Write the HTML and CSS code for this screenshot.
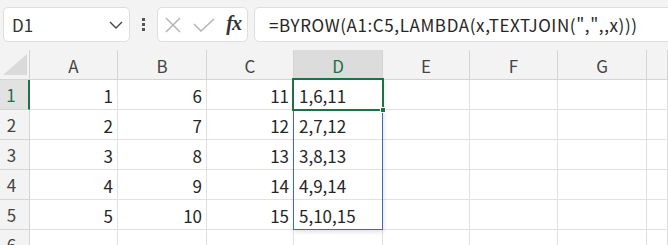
FILE: index.html
```html
<!DOCTYPE html>
<html lang="ja">
<head>
    <meta charset="UTF-8">
    <title>BYROW - Excel</title>
    <link rel="stylesheet" href="styles.css">
</head>
<body>
    <div class="toolbar">
        <div class="name-box">
            <span>D1</span>
            <svg class="chevron" width="14" height="8" viewBox="0 0 14 8"><path d="M1 1 L7 7 L13 1" fill="none" stroke="#444" stroke-width="1.4"/></svg>
        </div>
        <div class="dots"><i></i><i></i><i></i></div>
        <div class="fx-box">
            <svg width="16" height="16" viewBox="0 0 16 16"><path d="M1 1 L15 15 M15 1 L1 15" stroke="#b4b4b4" stroke-width="1.5" fill="none"/></svg>
            <svg width="22" height="14" viewBox="0 0 22 14"><path d="M1 6 L8 13 L21 1" stroke="#b4b4b4" stroke-width="1.5" fill="none"/></svg>
            <span class="fx">fx</span>
        </div>
        <div class="formula">=BYROW(A1:C5,LAMBDA(x,TEXTJOIN(",",,x)))</div>
    </div>

    <div class="sheet">
        <div class="hd corner">
            <svg width="24" height="21" viewBox="0 0 24 21"><path d="M24 0 L24 21 L0 21 Z" fill="#dadada"/></svg>
        </div>
        <div class="hd col">A</div>
        <div class="hd col">B</div>
        <div class="hd col">C</div>
        <div class="hd col active">D</div>
        <div class="hd col">E</div>
        <div class="hd col">F</div>
        <div class="hd col">G</div>
        <div class="hd col"></div>

        <div class="hd row active">1</div>
        <div class="cell num">1</div><div class="cell num">6</div><div class="cell num">11</div>
        <div class="cell text">1,6,11</div><div class="cell"></div><div class="cell"></div><div class="cell"></div><div class="cell"></div>

        <div class="hd row">2</div>
        <div class="cell num">2</div><div class="cell num">7</div><div class="cell num">12</div>
        <div class="cell text">2,7,12</div><div class="cell"></div><div class="cell"></div><div class="cell"></div><div class="cell"></div>

        <div class="hd row">3</div>
        <div class="cell num">3</div><div class="cell num">8</div><div class="cell num">13</div>
        <div class="cell text">3,8,13</div><div class="cell"></div><div class="cell"></div><div class="cell"></div><div class="cell"></div>

        <div class="hd row">4</div>
        <div class="cell num">4</div><div class="cell num">9</div><div class="cell num">14</div>
        <div class="cell text">4,9,14</div><div class="cell"></div><div class="cell"></div><div class="cell"></div><div class="cell"></div>

        <div class="hd row">5</div>
        <div class="cell num">5</div><div class="cell num">10</div><div class="cell num">15</div>
        <div class="cell text">5,10,15</div><div class="cell"></div><div class="cell"></div><div class="cell"></div><div class="cell"></div>

        <div class="hd row">6</div>
        <div class="cell"></div><div class="cell"></div><div class="cell"></div>
        <div class="cell"></div><div class="cell"></div><div class="cell"></div><div class="cell"></div><div class="cell"></div>

        <!-- spill range and active cell -->
        <div class="spill"></div>
        <div class="selected"><i class="handle"></i></div>
    </div>
</body>
</html>
```

FILE: styles.css
```css
:root {
    --bg: #f3f3f3;
    --grid: #e1e1e1;
    --hd-line: #d4d4d4;
    --green: #1e7145;
    --blue: #4169b4;
    --text: #262626;
}

* {
    margin: 0;
    padding: 0;
    box-sizing: border-box;
}

body {
    font-family: "Noto Sans CJK JP", "Noto Sans", sans-serif;
    background-color: var(--bg);
    color: var(--text);
    width: 668px;
    height: 245px;
    overflow: hidden;
}

/* formula bar */
.toolbar {
    height: 50px;
    display: flex;
    align-items: flex-start;
    padding: 7px 0 0 3px;
}

.name-box,
.fx-box,
.formula {
    height: 35px;
    background-color: #fff;
    border: 1px solid #dedede;
    border-radius: 5px;
    display: flex;
    align-items: center;
}

.name-box {
    width: 127px;
    padding: 0 6px 0 8px;
    justify-content: space-between;
    font-size: 17px;
    color: #333;
}

.dots {
    width: 27px;
    height: 35px;
    display: flex;
    flex-direction: column;
    align-items: center;
    justify-content: center;
    gap: 2px;
}

.dots i {
    width: 3px;
    height: 3px;
    background-color: #555;
}

.fx-box {
    width: 91px;
    padding: 0 6px 0 7px;
    justify-content: space-between;
}

.fx {
    font-family: "Liberation Serif", serif;
    font-style: italic;
    font-weight: bold;
    font-size: 20px;
    color: #333;
    letter-spacing: -1px;
    margin-top: -2px;
}

.formula {
    flex: 1;
    margin-left: 6px;
    margin-right: -10px;
    padding-left: 14px;
    font-size: 17px;
    letter-spacing: 0.6px;
    color: #262626;
    white-space: nowrap;
}

/* grid */
.sheet {
    position: relative;
    display: grid;
    grid-template-columns: 30px 88px 89px 87px 89px 87px 88px 89px 1fr;
    grid-auto-rows: 30px;
    background-color: #fff;
}

.hd {
    background-color: var(--bg);
    color: #444;
    font-size: 17px;
    display: flex;
    align-items: center;
    justify-content: center;
}

.corner {
    align-items: flex-end;
    justify-content: flex-start;
    padding: 0 0 4px 3px;
    border-right: 1px solid var(--hd-line);
    border-bottom: 1px solid var(--hd-line);
}

.col {
    border-right: 1px solid var(--hd-line);
    border-bottom: 1px solid var(--hd-line);
    padding-top: 2px;
}

.col.active {
    background-color: #dcdcdc;
    color: var(--green);
    border-bottom: 2px solid var(--green);
}

.row {
    border-right: 1px solid var(--hd-line);
    border-bottom: 1px solid var(--hd-line);
    padding-right: 6px;
}

.row.active {
    background-color: #e2e2e2;
    color: var(--green);
    border-right: 2px solid var(--green);
}

.cell {
    border-right: 1px solid var(--grid);
    border-bottom: 1px solid var(--grid);
    font-size: 17px;
    display: flex;
    align-items: center;
    padding: 2px 4px 0 5px;
    white-space: nowrap;
}

.cell.num {
    justify-content: flex-end;
}

.spill {
    position: absolute;
    left: 293px;
    top: 29px;
    width: 90px;
    height: 151px;
    border: 1px solid var(--blue);
    box-shadow: 1px 2px 4px rgba(0, 0, 0, 0.12);
    pointer-events: none;
}

.selected {
    position: absolute;
    left: 292px;
    top: 28px;
    width: 92px;
    height: 33px;
    border: 2px solid var(--green);
}

.handle {
    position: absolute;
    right: -4px;
    bottom: -4px;
    width: 6px;
    height: 6px;
    background-color: var(--green);
    border: 1px solid #fff;
}
```
